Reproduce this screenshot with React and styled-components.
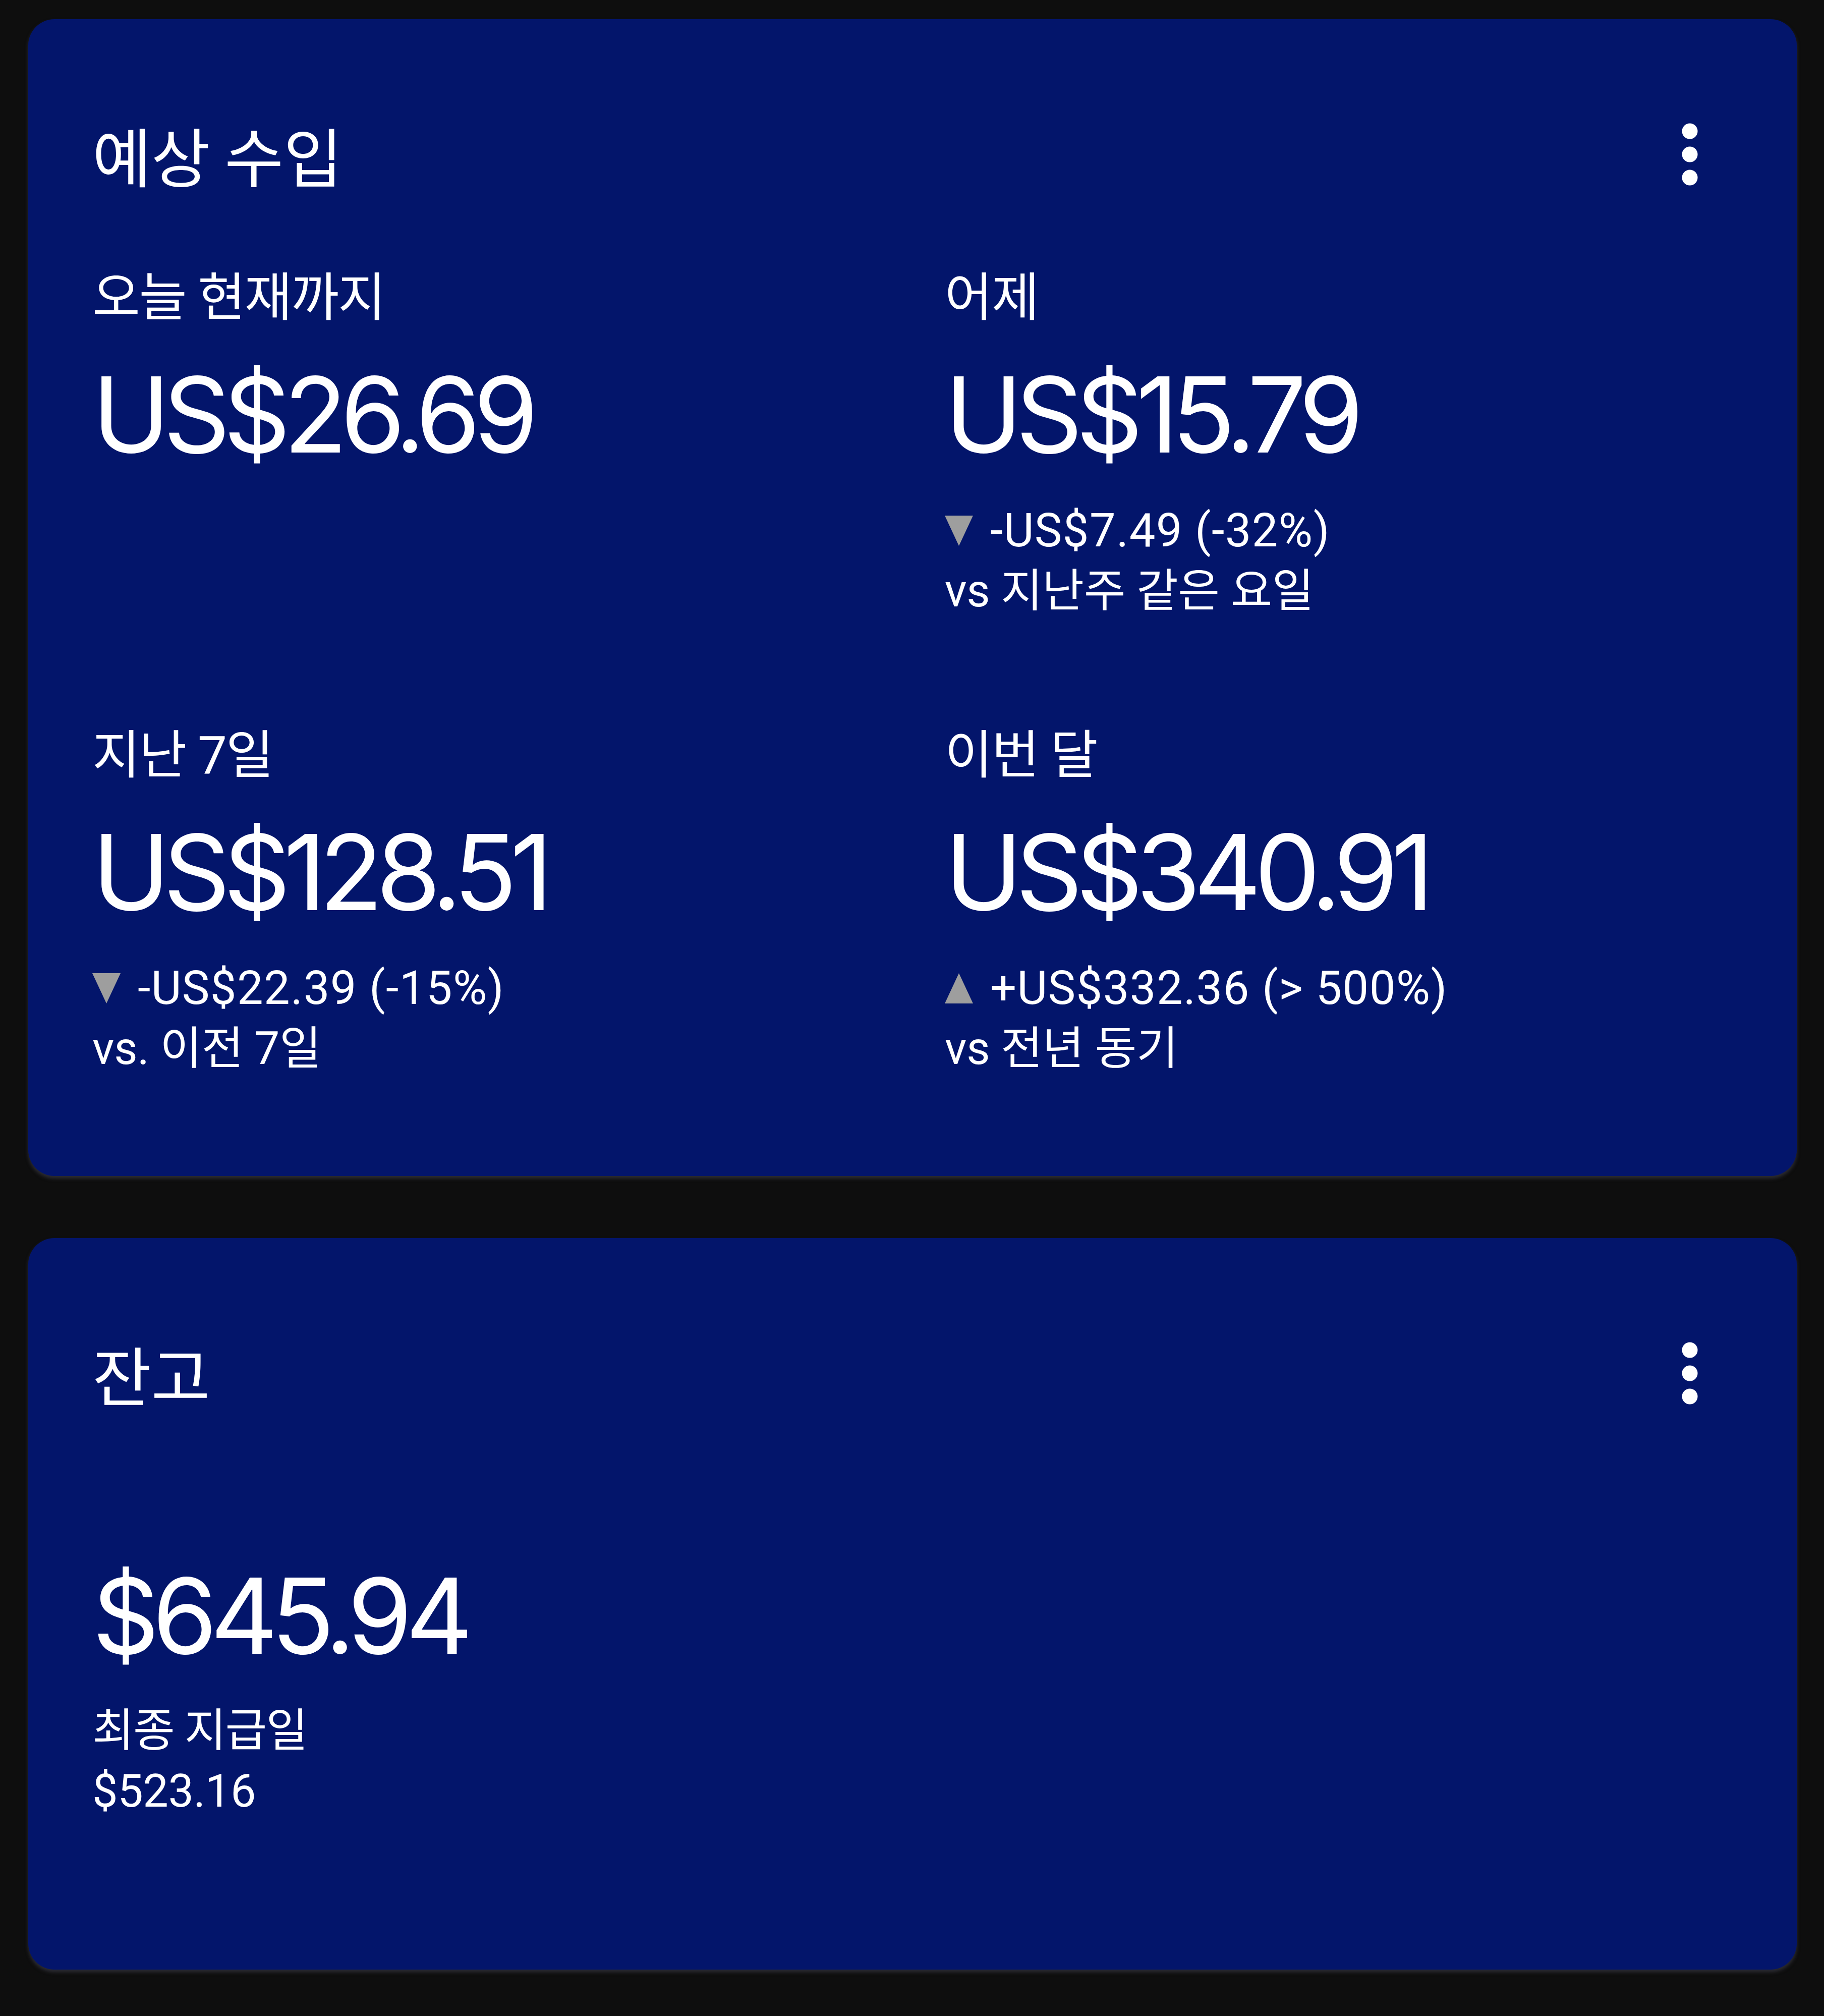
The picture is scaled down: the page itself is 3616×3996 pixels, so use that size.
import React from "react";
import styled, { createGlobalStyle } from "styled-components";

const GlobalStyle = createGlobalStyle`
  html, body {
    margin: 0;
    background: #0e0e0e;
  }
`;

const Page = styled.div`
  display: flex;
  flex-direction: column;
  gap: 123px;
  padding: 38px 54px 80px 56px;
  font-family: Roboto, "Noto Sans CJK KR", sans-serif;
  color: #ffffff;
`;

const Card = styled.section`
  background: #03156b;
  border-radius: 52px;
  padding: 193px 152px ${(p) => p.$padBottom}px 127px;
  box-shadow: 0 5px 7px rgba(70, 70, 82, 0.55);
`;

const Header = styled.header`
  display: flex;
  align-items: center;
  justify-content: space-between;
  height: 150px;
`;

const Title = styled.h2`
  margin: 0;
  font-family: "Noto Sans CJK KR", sans-serif;
  font-size: 127px;
  font-weight: 400;
  line-height: 150px;
`;

const MenuButton = styled.button`
  display: flex;
  align-items: center;
  justify-content: center;
  width: 120px;
  height: 150px;
  padding: 0;
  border: 0;
  background: transparent;
  color: #ffffff;
`;

const StatGrid = styled.div`
  display: grid;
  grid-template-columns: 1690px 1fr;
  row-gap: 206px;
  align-items: start;
  margin-top: 150px;
`;

const Stat = styled.div`
  display: flex;
  flex-direction: column;
`;

const Label = styled.div`
  font-family: Roboto, "Noto Sans CJK KR", sans-serif;
  font-size: ${(p) => (p.$small ? 90 : 103)}px;
  line-height: 120px;
  letter-spacing: -0.02em;
`;

const BigValue = styled.div`
  margin-top: ${(p) => p.$gap}px;
  font-family: Inter, sans-serif;
  font-size: 207px;
  line-height: 212px;
  letter-spacing: -0.065em;
`;

const Change = styled.div`
  display: flex;
  align-items: center;
  margin-top: 64px;
  font-size: 92px;
  line-height: 120px;
  letter-spacing: 0.015em;
`;

const Line = styled.div`
  font-family: Roboto, "Noto Sans CJK KR", sans-serif;
  font-size: 90px;
  line-height: 120px;
  letter-spacing: -0.005em;
`;

const Arrow = styled.svg`
  flex: none;
  width: 56px;
  height: 60px;
  margin-right: 34px;
  fill: #9e9e9e;
`;

const KebabIcon = () => (
  <svg width="32" height="124" viewBox="0 0 32 124">
    <circle cx="16" cy="16" r="15.5" fill="currentColor" />
    <circle cx="16" cy="62" r="15.5" fill="currentColor" />
    <circle cx="16" cy="108" r="15.5" fill="currentColor" />
  </svg>
);

const Trend = ({ up, children }) => (
  <Change>
    <Arrow viewBox="0 0 56 60">
      {up ? <polygon points="28,0 56,60 0,60" /> : <polygon points="0,0 56,0 28,60" />}
    </Arrow>
    <span>{children}</span>
  </Change>
);

const stats = [
  { label: "오늘 현재까지", value: "US$26.69" },
  {
    label: "어제",
    value: "US$15.79",
    change: "-US$7.49 (-32%)",
    compare: "vs 지난주 같은 요일",
  },
  {
    label: "지난 7일",
    value: "US$128.51",
    change: "-US$22.39 (-15%)",
    compare: "vs. 이전 7일",
  },
  {
    label: "이번 달",
    value: "US$340.91",
    change: "+US$332.36 (> 500%)",
    up: true,
    compare: "vs 전년 동기",
  },
];

export default function App() {
  return (
    <>
      <GlobalStyle />
      <Page>
        <Card $padBottom={192}>
          <Header>
            <Title>예상 수입</Title>
            <MenuButton aria-label="더보기">
              <KebabIcon />
            </MenuButton>
          </Header>
          <StatGrid>
            {stats.map((s) => (
              <Stat key={s.label}>
                <Label>{s.label}</Label>
                <BigValue $gap={65}>{s.value}</BigValue>
                {s.change && <Trend up={s.up}>{s.change}</Trend>}
                {s.compare && <Line>{s.compare}</Line>}
              </Stat>
            ))}
          </StatGrid>
        </Card>

        <Card $padBottom={293}>
          <Header>
            <Title>잔고</Title>
            <MenuButton aria-label="더보기">
              <KebabIcon />
            </MenuButton>
          </Header>
          <Stat>
            <BigValue $gap={300}>$645.94</BigValue>
            <Label $small style={{ marginTop: 62 }}>최종 지급일</Label>
            <Line>$523.16</Line>
          </Stat>
        </Card>
      </Page>
    </>
  );
}
